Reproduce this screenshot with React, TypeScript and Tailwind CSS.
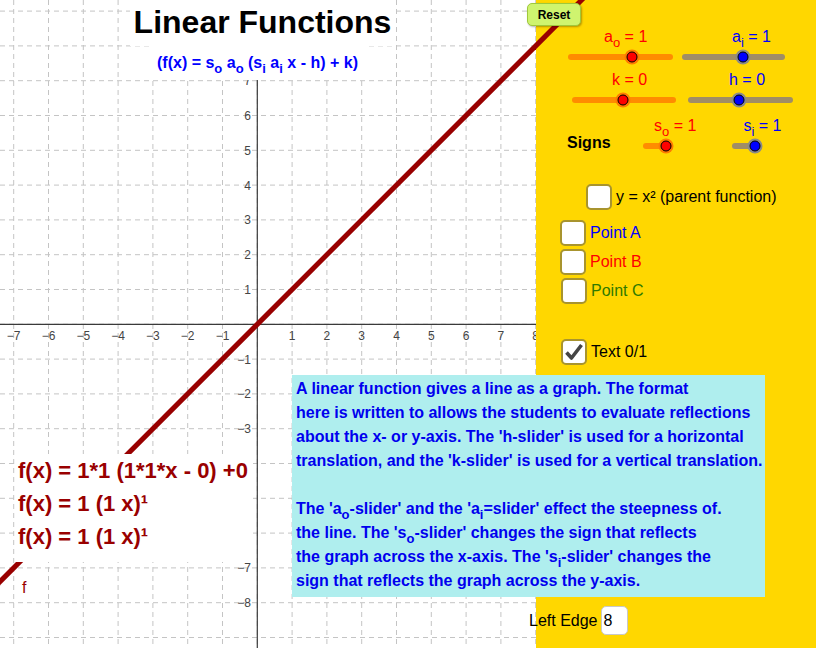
import React from 'react'

const U = 34.8
const OX = 257.3
const OY = 324.3
const px = (x: number): number => OX + x * U
const py = (y: number): number => OY - y * U

const minus = (n: number): string => (n < 0 ? `\u2212${-n}` : `${n}`)

// graphics view: dashed grid, axes, labels and the graph of f
function Graph(): JSX.Element {
  const xs = Array.from({ length: 16 }, (_, i) => i - 7)
  const ys = Array.from({ length: 20 }, (_, i) => 9 - i)
  return (
    <svg width={536} height={648} className="block" fontFamily="'Liberation Sans', Arial, sans-serif">
      <rect width={536} height={648} fill="#ffffff" />
      {xs.map((k) => (
        <line key={`gx${k}`} x1={px(k)} y1={0} x2={px(k)} y2={648} stroke="#c4c4c4" strokeWidth={1} strokeDasharray="5 4" />
      ))}
      {ys.map((k) => (
        <line key={`gy${k}`} x1={0} y1={py(k)} x2={536} y2={py(k)} stroke="#c4c4c4" strokeWidth={1} strokeDasharray="5 4" />
      ))}
      <line x1={0} y1={OY} x2={536} y2={OY} stroke="#3a3a3a" strokeWidth={1.2} />
      <line x1={OX} y1={0} x2={OX} y2={648} stroke="#3a3a3a" strokeWidth={1.2} />
      {xs.filter((k) => k !== 0).map((k) => (
        <text key={`lx${k}`} x={px(k)} y={340} fontSize={12} fill="#444" textAnchor="middle">
          {minus(k)}
        </text>
      ))}
      {[7, 6, 5, 4, 3, 2, 1, -1, -2, -3, -7, -8].map((k) => (
        <text key={`ly${k}`} x={251} y={py(k) + 4.5} fontSize={12} fill="#444" textAnchor="end">
          {minus(k)}
        </text>
      ))}
      <line x1={-10} y1={591.6} x2={591.6} y2={-10} stroke="#990000" strokeWidth={5} />
    </svg>
  )
}

function Sub({ children }: { children: React.ReactNode }): JSX.Element {
  return <span className="relative top-[5px] text-[13px] leading-none">{children}</span>
}

function SliderUnit({
  label,
  labelPad,
  track,
  knob,
  tone,
}: {
  label: React.ReactNode
  labelPad: string
  track: string
  knob: string
  tone: 'red' | 'blue'
}): JSX.Element {
  const red = tone === 'red'
  return (
    <div className="flex flex-col">
      <div className={`h-[18px] whitespace-nowrap ${labelPad} ${red ? 'text-[#ff0000]' : 'text-[#0000ff]'}`}>{label}</div>
      <div className={`relative mt-[8px] h-[6px] rounded-full ${red ? 'bg-[#ff8c00]' : 'bg-[#a08d66]'} ${track}`}>
        <div
          className={`absolute top-1/2 -translate-x-1/2 -translate-y-1/2 w-[15px] h-[15px] rounded-full flex items-center justify-center ${
            red ? 'bg-[#ff7a00]' : 'bg-[#8a8a8a]'
          } ${knob}`}
        >
          <div className={`w-[11px] h-[11px] rounded-full border border-black ${red ? 'bg-[#ff0000]' : 'bg-[#0000ff]'}`} />
        </div>
      </div>
    </div>
  )
}

function CheckBox({ checked = false }: { checked?: boolean }): JSX.Element {
  return (
    <div className="w-[26px] h-[26px] shrink-0 bg-white border-2 border-[#a8942e] rounded-[5px] flex items-center justify-center">
      {checked && (
        <svg width="20" height="20" viewBox="0 0 20 20">
          <path d="M2.5 10.5 L7.5 16 L17.5 3" fill="none" stroke="#454545" strokeWidth={3.6} strokeLinejoin="round" />
        </svg>
      )}
    </div>
  )
}

function CheckRow({ label, className, checked }: { label: string; className: string; checked?: boolean }): JSX.Element {
  return (
    <div className={`flex items-center gap-[4px] whitespace-nowrap ${className}`}>
      <CheckBox checked={checked} />
      <span>{label}</span>
    </div>
  )
}

export default function App(): JSX.Element {
  return (
    <div className="relative w-[816px] h-[648px] overflow-hidden font-['Liberation_Sans',Arial,sans-serif] select-none">
      <div className="flex h-full">
        <div className="w-[536px] h-full">
          <Graph />
        </div>

        {/* control panel */}
        <div className="relative flex-1 h-full flex flex-col pt-[28px] pb-[13px] bg-[#ffd700] text-[16px] leading-[18px] text-black">
          <svg className="absolute left-0 top-0" width={50} height={50}>
            <line x1={-5} y1={50.6} x2={50.6} y2={-5} stroke="#990000" strokeWidth={5} />
          </svg>

          <div className="flex pl-[32px] gap-[9px]">
            <SliderUnit tone="red" label={<>a<Sub>o</Sub> = 1</>} labelPad="pl-[36px]" track="w-[105px]" knob="left-[64px]" />
            <SliderUnit tone="blue" label={<>a<Sub>i</Sub> = 1</>} labelPad="pl-[50px]" track="w-[103px]" knob="left-[61px]" />
          </div>

          <div className="flex mt-[11px] pl-[36px] gap-[12px]">
            <SliderUnit tone="red" label="k = 0" labelPad="pl-[40px]" track="w-[104px]" knob="left-[51px]" />
            <SliderUnit tone="blue" label="h = 0" labelPad="pl-[41px]" track="w-[105px]" knob="left-[51px]" />
          </div>

          <div className="flex items-end mt-[14px] pl-[31px]">
            <span className="w-[76px] mb-[-3px] font-bold">Signs</span>
            <SliderUnit tone="red" label={<>s<Sub>o</Sub> = 1</>} labelPad="pl-[11px]" track="w-[24px]" knob="left-[23px]" />
            <div className="ml-[36px]">
              <SliderUnit tone="blue" label={<>s<Sub>i</Sub> = 1</>} labelPad="pl-[11px]" track="w-[28px]" knob="left-[23px]" />
            </div>
          </div>

          <CheckRow label="y = x² (parent function)" className="mt-[35px] ml-[50px]" />
          <div className="flex flex-col gap-[3px] mt-[10px] ml-[24px]">
            <CheckRow label="Point A" className="text-[#0000ff]" />
            <CheckRow label="Point B" className="text-[#ff0000]" />
            <CheckRow label="Point C" className="ml-[1px] text-[#2f7a00]" />
          </div>
          <CheckRow label="Text 0/1" className="mt-[35px] ml-[25px]" checked />

          <div className="flex items-center gap-[3px] mt-auto -ml-[7px] whitespace-nowrap">
            <span>Left Edge</span>
            <div className="w-[27px] h-[29px] pl-[2px] bg-white border border-[#c8c8c8] rounded-[5px] leading-[27px]">8</div>
          </div>
        </div>
      </div>

      {/* texts placed on the canvas */}
      <div className="absolute left-[130px] top-0 w-[265px] h-[46px] pt-[2px] bg-white text-center text-[32px] font-bold leading-[40px] text-black">
        Linear Functions
      </div>
      <div className="absolute left-[150px] top-[46px] w-[215px] h-[34px] pt-[5px] bg-white text-center text-[16px] font-bold leading-[24px] text-[#0000ff] whitespace-nowrap">
        (f(x) = s<Sub>o</Sub> a<Sub>o</Sub> (s<Sub>i</Sub> a<Sub>i</Sub> x - h) + k)
      </div>

      <div className="absolute left-[15px] top-[454px] w-[238px] h-[108px] pl-[3px] bg-white text-[22px] font-bold leading-[33px] text-[#990000] whitespace-nowrap">
        <div>f(x) = 1*1 (1*1*x - 0) +0</div>
        <div>f(x) = 1 (1 x)¹</div>
        <div>f(x) = 1 (1 x)¹</div>
      </div>
      <div className="absolute left-[22px] top-[579px] text-[16px] leading-[18px] text-[#990000]">f</div>

      <div className="absolute left-[292px] top-[375px] w-[473px] h-[222px] pl-[4px] pt-[2px] bg-[#afeeee] text-[16px] font-bold leading-[24px] text-[#0000ee] whitespace-nowrap">
        <p>A linear function gives a line as a graph. The format</p>
        <p>here is written to allows the students to evaluate reflections</p>
        <p>about the x- or y-axis. The 'h-slider' is used for a horizontal</p>
        <p className="mb-[24px]">translation, and the 'k-slider' is used for a vertical translation.</p>
        <p>
          The 'a<Sub>o</Sub>-slider' and the 'a<Sub>i</Sub>=slider' effect the steepness of.
        </p>
        <p>
          the line. The 's<Sub>o</Sub>-slider' changes the sign that reflects
        </p>
        <p>
          the graph across the x-axis. The 's<Sub>i</Sub>-slider' changes the
        </p>
        <p>sign that reflects the graph across the y-axis.</p>
      </div>

      <button className="absolute left-[527px] top-[3px] w-[54px] h-[23px] rounded-[5px] bg-[#cff46f] border border-[#9fc83c] shadow-[1px_1px_2px_rgba(0,0,0,0.3)] text-[12px] font-bold leading-none text-black">
        Reset
      </button>
    </div>
  )
}
